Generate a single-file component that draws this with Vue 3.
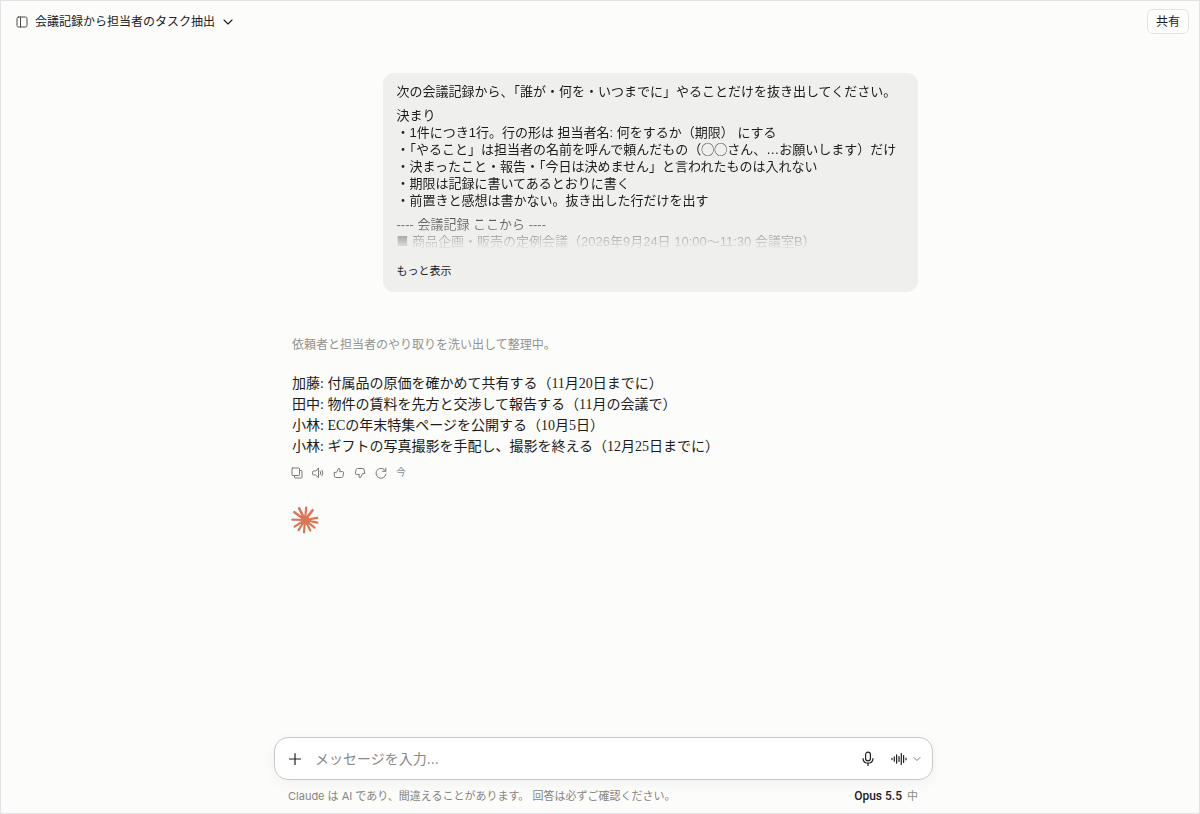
<script setup>
import { ref } from 'vue'

const draft = ref('')
const rules = [
  '決まり',
  '・1件につき1行。行の形は 担当者名: 何をするか（期限） にする',
  '・「やること」は担当者の名前を呼んで頼んだもの（◯◯さん、…お願いします）だけ',
  '・決まったこと・報告・「今日は決めません」と言われたものは入れない',
  '・期限は記録に書いてあるとおりに書く',
  '・前置きと感想は書かない。抜き出した行だけを出す',
]
const tasks = [
  '加藤: 付属品の原価を確かめて共有する（11月20日までに）',
  '田中: 物件の賃料を先方と交渉して報告する（11月の会議で）',
  '小林: ECの年末特集ページを公開する（10月5日）',
  '小林: ギフトの写真撮影を手配し、撮影を終える（12月25日までに）',
]
</script>

<template>
  <div class="app">
    <header class="topbar">
      <button class="plain" aria-label="サイドバーを開く">
        <svg width="12" height="12" viewBox="0 0 12 12" class="line">
          <rect x="1" y="1" width="10" height="10" rx="1.5" />
          <path d="M4.5 1v10" />
        </svg>
      </button>
      <button class="plain title">
        <span>会議記録から担当者のタスク抽出</span>
        <svg width="10" height="10" viewBox="0 0 10 10" class="line chev"><path d="M1 3l4 4 4-4" /></svg>
      </button>
      <button class="share">共有</button>
    </header>

    <main class="thread">
      <div class="column">
        <section class="bubble">
          <div class="clip">
            <p>次の会議記録から、「誰が・何を・いつまでに」やることだけを抜き出してください。</p>
            <p><span v-for="r in rules" :key="r" class="row">{{ r }}</span></p>
            <p>
              <span class="row">---- 会議記録 ここから ----</span>
              <span class="row"><span class="mark">■</span> 商品企画・販売の定例会議（2026年9月24日 10:00〜11:30 会議室B）</span>
            </p>
          </div>
          <button class="plain more">もっと表示</button>
        </section>

        <article class="reply">
          <p class="thinking">依頼者と担当者のやり取りを洗い出して整理中。</p>
          <p class="answer"><span v-for="t in tasks" :key="t" class="row">{{ t }}</span></p>
          <div class="actions">
            <button class="plain" aria-label="コピー">
              <svg width="12" height="12" viewBox="0 0 12 12" class="line">
                <rect x="1" y="1" width="7.5" height="7.5" rx="0.6" />
                <path d="M8.5 3.5h1.9q.6 0 .6.6v6.3q0 .6-.6.6H4.1q-.6 0-.6-.6V8.5" />
              </svg>
            </button>
            <button class="plain" aria-label="読み上げ">
              <svg width="12" height="12" viewBox="0 0 12 12" class="line">
                <path d="M6.5 1.3v9.4L3.6 8H1.4Q.6 8 .6 7.2V4.8Q.6 4 1.4 4h2.2z" />
                <path d="M8.3 4.4q1 1.6 0 3.2M10 3.2q2 2.8 0 5.6" />
              </svg>
            </button>
            <button class="plain" aria-label="良い回答">
              <svg width="12" height="12" viewBox="0 0 12 12" class="line">
                <path d="M1.5 5.4h2L5.6 1.3q1.6 0 1.4 1.6l-.4 1.7h3q1.2.1 1 1.3l-.7 3.4q-.3 1.2-1.4 1.2H2.6q-1.1 0-1.1-1.1z" />
              </svg>
            </button>
            <button class="plain" aria-label="悪い回答">
              <svg width="12" height="12" viewBox="0 0 12 12" class="line">
                <path d="M10.5 6.6h-2L6.4 10.7q-1.6 0-1.4-1.6l.4-1.7h-3q-1.2-.1-1-1.3l.7-3.4q.3-1.2 1.4-1.2h5.5q1.1 0 1.1 1.1z" />
              </svg>
            </button>
            <button class="plain" aria-label="再試行">
              <svg width="12" height="12" viewBox="0 0 12 12" class="line">
                <path d="M10.8 1v3.3H7.5M10.6 4.2A5 5 0 1 0 11 7" />
              </svg>
            </button>
            <time>今</time>
          </div>
          <svg class="spark" width="28" height="28" viewBox="0 0 28 28" aria-hidden="true">
            <g stroke-linecap="round">
              <path stroke-width="2.6" d="M14 14L8.2 2.4M14 14L21.6 4.2M14 14L3.4 6.2" />
              <path stroke-width="2.2" d="M14 14L15.2 1.6M14 14L26.2 11.8M14 14L1.4 13.6M14 14L3.6 20.6M14 14L7.6 24.2" />
              <path stroke-width="2.2" d="M14 14L26.4 16.6M14 14L23.6 21.6M14 14L19.4 24.6M14 14L13 26.4" />
            </g>
            <circle cx="14" cy="14" r="4" />
          </svg>
        </article>
      </div>
    </main>

    <footer class="dock">
      <form class="composer" @submit.prevent>
        <button type="button" class="plain dark" aria-label="追加">
          <svg width="14" height="14" viewBox="0 0 14 14" class="line bold"><path d="M7 1.5v11M1.5 7h11" /></svg>
        </button>
        <input v-model="draft" type="text" aria-label="メッセージ" placeholder="メッセージを入力..." />
        <button type="button" class="plain dark" aria-label="音声入力">
          <svg width="14" height="16" viewBox="0 0 14 16" class="line bold">
            <rect x="4.6" y="1.2" width="4.8" height="8.6" rx="2.4" />
            <path d="M2 7.5q.3 4.7 5 4.7t5-4.7M7 12.2v2.4" />
          </svg>
        </button>
        <button type="button" class="plain dark voice" aria-label="音声モード">
          <svg width="16" height="14" viewBox="0 0 16 14" class="line bold">
            <path d="M1 6.4v1.2M3.3 4.8v4.4M5.6 2.8v8.4M8 4.6v4.8M10.3 1.6v10.8M12.6 3.6v6.8M15 6.2v1.6" />
          </svg>
        </button>
        <button type="button" class="plain" aria-label="音声の設定">
          <svg width="8" height="8" viewBox="0 0 8 8" class="line"><path d="M1 2.5l3 3 3-3" /></svg>
        </button>
      </form>
      <div class="note">
        <span>Claude は AI であり、間違えることがあります。 回答は必ずご確認ください。</span>
        <button class="plain model"><b>Opus 5.5</b><span>中</span></button>
      </div>
    </footer>
  </div>
</template>

<style>
body {
  background: #fcfcfa;
}
</style>

<style scoped>
* {
  box-sizing: border-box;
}
.app {
  display: flex;
  flex-direction: column;
  min-height: 100vh;
  border: 1px solid #e1e2e6;
  background: #fcfcfa;
  color: #1c1c1b;
  font-family: Inter, 'Noto Sans CJK JP', sans-serif;
  font-size: 13px;
  line-height: 17px;
}
p {
  margin: 0;
}
button,
input {
  font: inherit;
  color: inherit;
}
.plain {
  display: flex;
  align-items: center;
  padding: 0;
  border: 0;
  background: none;
  color: #7b7b78;
}
.dark {
  color: #20201f;
}
.line {
  display: block;
  fill: none;
  stroke: currentColor;
  stroke-width: 1;
  stroke-linecap: round;
  stroke-linejoin: round;
}
.bold {
  stroke-width: 1.2;
}
.topbar {
  display: flex;
  align-items: center;
  gap: 7px;
  height: 41px;
  padding: 0 10px 0 15px;
  font-size: 12px;
}
.topbar .plain {
  color: #4d4d4b;
}
.topbar .title {
  gap: 8px;
  color: #20201f;
}
.chev {
  stroke-width: 1.1;
}
.share {
  width: 42px;
  height: 25px;
  margin-left: auto;
  padding: 0;
  border: 1px solid #e4e4e2;
  border-radius: 6px;
  background: #fefefd;
}
.thread {
  flex: 1;
  padding: 31px 0 0 7px;
}
.column,
.dock > * {
  width: 100%;
  max-width: 659px;
  margin: 0 auto;
}
.column {
  display: flex;
  flex-direction: column;
  padding: 0 15px 0 14px;
}
.bubble {
  align-self: flex-end;
  width: 85%;
  padding: 10px 14px 8px;
  border-radius: 11px;
  background: #efefed;
}
.clip {
  display: flex;
  flex-direction: column;
  gap: 7px;
  font-family: 'Liberation Sans', 'Noto Sans CJK JP', sans-serif;
  mask-image: linear-gradient(to bottom, #000 calc(100% - 42px), transparent);
}
.row {
  display: block;
}
.mark {
  font-family: Inter, sans-serif;
}
.bubble .more {
  height: 25px;
  margin-top: 9px;
  color: #20201f;
  font-size: 11px;
}
.reply {
  padding: 44px 4px 0;
}
.thinking {
  color: #93938f;
  font-size: 12px;
}
.answer {
  margin-top: 20px;
  font-family: 'Liberation Serif', 'Noto Sans CJK JP', serif;
  font-size: 14px;
  line-height: 21px;
}
.actions {
  display: flex;
  align-items: center;
  gap: 9px;
  margin-top: 7px;
  margin-left: -1px;
}
.actions time {
  color: #8b8b88;
  font-size: 10px;
}
.spark {
  display: block;
  margin: 25px 0 0 -1px;
  stroke: #d97757;
  fill: #d97757;
}
.dock {
  padding: 0 0 8px 7px;
}
.composer {
  display: flex;
  align-items: center;
  height: 43px;
  padding: 0 11px 0 13px;
  border: 1px solid #c9c9c7;
  border-radius: 14px;
  background: #fff;
  box-shadow: 0 3px 14px rgba(0, 0, 0, 0.05);
}
.composer input {
  flex: 1;
  min-width: 0;
  margin: 0 14px 0 13px;
  padding: 0;
  border: 0;
  outline: 0;
  background: none;
  font-size: 14px;
}
.composer input::placeholder {
  color: #8a8a86;
  opacity: 1;
}
.voice {
  margin: 0 6px 0 16px;
}
.note {
  display: flex;
  justify-content: space-between;
  padding: 8px 15px 0 14px;
  color: #85857f;
  font-size: 11px;
}
.model {
  gap: 5px;
  color: #8b8b88;
}
.model b {
  color: #20201f;
  font-family: Roboto, sans-serif;
  font-size: 12px;
  font-weight: 500;
}
</style>
